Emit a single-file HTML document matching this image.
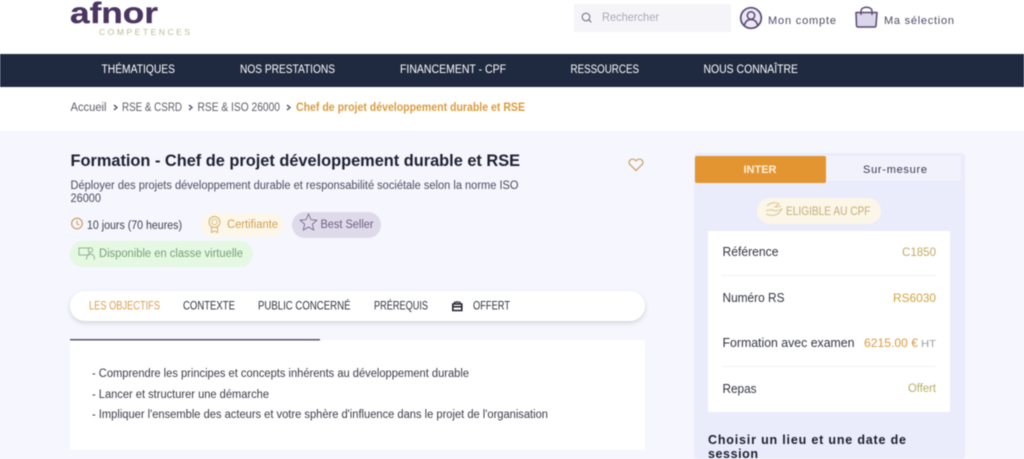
<!DOCTYPE html>
<html lang="fr"><head><meta charset="utf-8"><title>Formation</title>
<style>
html,body{margin:0;padding:0;width:1024px;height:459px;overflow:hidden;background:#f5f6fe}
svg{display:block;filter:blur(.45px)}
text{font-family:"Liberation Sans",sans-serif;font-size:11.5px;fill:#33364a}
.b{font-weight:700}
</style></head><body>
<svg width="1024" height="459" viewBox="0 0 1024 459" xmlns="http://www.w3.org/2000/svg">
<defs>
<filter id="sh" x="-5%" y="-30%" width="110%" height="170%"><feDropShadow dx="0" dy="2" stdDeviation="2" flood-color="#555" flood-opacity=".22"/></filter>
</defs>
<rect width="1024" height="459" fill="#f5f6fe"/>
<rect width="1024" height="54" fill="#fff"/>
<rect y="54" width="1024" height="33" fill="#1f2a40"/>
<rect y="87" width="1024" height="44" fill="#fff"/>

<!-- logo -->
<text x="70" y="23" class="b" style="font-size:30px;fill:#4a3560;stroke:#4a3560;stroke-width:.3" textLength="88" lengthAdjust="spacingAndGlyphs">afnor</text>
<text x="99" y="35" style="font-size:8.500px;fill:#bcb98e" textLength="91" lengthAdjust="spacing">COMPETENCES</text>

<!-- search -->
<rect x="574" y="4" width="157" height="28" rx="2" fill="#f5f5f9"/>
<circle cx="586" cy="17" r="3.800" fill="none" stroke="#77778a" stroke-width="1.100"/>
<path d="M588.800 19.800l2.500 2.500" stroke="#77778a" stroke-width="1.100"/>
<text x="602" y="21" style="font-size:12px;fill:#a9a9b5" textLength="57" lengthAdjust="spacingAndGlyphs">Rechercher</text>

<!-- account -->
<circle cx="751" cy="18" r="10.300" fill="#ece8f4" stroke="#57496f" stroke-width="1.700"/>
<circle cx="751" cy="15.500" r="3.700" fill="none" stroke="#57496f" stroke-width="1.500"/>
<path d="M744.500 25c1-4 3.500-5.500 6.500-5.500s5.500 1.500 6.500 5.500" fill="none" stroke="#57496f" stroke-width="1.500"/>
<text x="768" y="24" style="font-size:11px;fill:#4e4a62" textLength="68" lengthAdjust="spacing">Mon compte</text>

<!-- bag -->
<path d="M856 12.500h21l-1 13a1.500 1.500 0 0 1-1.500 1.500h-16.500a1.500 1.500 0 0 1-1.500-1.500z" fill="#dcd6ea" stroke="#57496f" stroke-width="1.500" stroke-linejoin="round"/>
<path d="M861 15v-4c0-5 11-5 11 0v4" fill="none" stroke="#57496f" stroke-width="1.400"/>
<text x="884" y="24" style="font-size:11px;fill:#4e4a62" textLength="70" lengthAdjust="spacing">Ma sélection</text>

<!-- nav -->
<g>
<text x="101.500" y="73" style="font-size:11.500px;fill:#fff" textLength="73.500" lengthAdjust="spacingAndGlyphs">THÉMATIQUES</text>
<text x="240" y="73" style="font-size:11.500px;fill:#fff" textLength="95" lengthAdjust="spacingAndGlyphs">NOS PRESTATIONS</text>
<text x="400" y="73" style="font-size:11.500px;fill:#fff" textLength="106" lengthAdjust="spacingAndGlyphs">FINANCEMENT - CPF</text>
<text x="570.500" y="73" style="font-size:11.500px;fill:#fff" textLength="68.500" lengthAdjust="spacingAndGlyphs">RESSOURCES</text>
<text x="703.500" y="73" style="font-size:11.500px;fill:#fff" textLength="94.500" lengthAdjust="spacingAndGlyphs">NOUS CONNAÎTRE</text>
</g>

<!-- breadcrumb -->
<g>
<text x="70.500" y="111" style="fill:#5b5b68" textLength="36" lengthAdjust="spacingAndGlyphs">Accueil</text>
<path d="M114 105l3 2.500-3 2.500M189 105l3 2.500-3 2.500M287 105l3 2.500-3 2.500" fill="none" stroke="#44465a" stroke-width="1.300"/>
<text x="122" y="111" style="fill:#5b5b68" textLength="60" lengthAdjust="spacingAndGlyphs">RSE &amp; CSRD</text>
<text x="197.500" y="111" style="fill:#5b5b68" textLength="82.500" lengthAdjust="spacingAndGlyphs">RSE &amp; ISO 26000</text>
<text x="296" y="111" class="b" style="font-size:11.500px;fill:#d99b3c" textLength="229" lengthAdjust="spacingAndGlyphs">Chef de projet développement durable et RSE</text>
</g>

<!-- title -->
<text x="70.500" y="166" class="b" style="font-size:17px;fill:#1d2032" textLength="449.500" lengthAdjust="spacingAndGlyphs">Formation - Chef de projet développement durable et RSE</text>
<text x="70.500" y="189" style="font-size:11.500px;fill:#494b5c" textLength="448" lengthAdjust="spacingAndGlyphs">Déployer des projets développement durable et responsabilité sociétale selon la norme ISO</text>
<text x="70.500" y="202" style="font-size:11.500px;fill:#494b5c" textLength="30.500" lengthAdjust="spacingAndGlyphs">26000</text>

<path d="M636 170.500l-6-5.900c-3-3.400 1.900-8 6-3.800 4.100-4.200 9 .4 6 3.800z" fill="none" stroke="#c9a76a" stroke-width="1.300"/>

<!-- badges -->
<circle cx="77" cy="223.500" r="5.300" fill="none" stroke="#c89b52" stroke-width="1.100"/>
<path d="M77 220.500v3.300l2.200 1.200" fill="none" stroke="#c89b52" stroke-width="1"/>
<text x="87" y="229" style="font-size:11.500px;fill:#3c3e50" textLength="95" lengthAdjust="spacingAndGlyphs">10 jours (70 heures)</text>

<rect x="201" y="213" width="83" height="24" rx="12" fill="#fdf7ea"/>
<circle cx="214.500" cy="222" r="5.500" fill="none" stroke="#d3b26c" stroke-width="1"/>
<circle cx="214.500" cy="222" r="2.800" fill="none" stroke="#d3b26c" stroke-width=".8"/>
<path d="M211.500 226.500v6l3-1.500 3 1.500v-6" fill="none" stroke="#d3b26c" stroke-width="1"/>
<text x="227" y="228" style="font-size:11.500px;fill:#d2a04e" textLength="51" lengthAdjust="spacingAndGlyphs">Certifiante</text>

<rect x="292" y="212" width="89" height="26" rx="13" fill="#dfdaea"/>
<path d="M308.500 214l2.400 5.600 6 .6-4.500 4 1.300 5.900-5.200-3.100-5.200 3.100 1.300-5.900-4.500-4 6-.6z" fill="none" stroke="#6d5f88" stroke-width=".8"/>
<text x="320.500" y="228" style="font-size:11.500px;fill:#6a5f80" textLength="53" lengthAdjust="spacingAndGlyphs">Best Seller</text>

<rect x="70" y="241" width="183" height="26" rx="13" fill="#e5f8e2"/>
<rect x="79" y="248" width="10" height="7" fill="none" stroke="#8aa98c" stroke-width=".9"/>
<circle cx="90.500" cy="250" r="2.200" fill="#e5f8e2" stroke="#8aa98c" stroke-width=".9"/>
<path d="M86.500 259.500c0-4 2-5.500 4-5.500s4 1.500 4 5.500" fill="none" stroke="#8aa98c" stroke-width=".9"/>
<text x="99" y="257" style="font-size:11.500px;fill:#76a07a" textLength="144" lengthAdjust="spacingAndGlyphs">Disponible en classe virtuelle</text>

<!-- tabs -->
<rect x="70" y="291" width="575" height="30" rx="15" fill="#fff" filter="url(#sh)"/>
<text x="89" y="309.500" style="font-size:11.500px;fill:#dc9d50" textLength="71" lengthAdjust="spacingAndGlyphs">LES OBJECTIFS</text>
<text x="183" y="309.500" style="font-size:11.500px;fill:#30323f" textLength="52" lengthAdjust="spacingAndGlyphs">CONTEXTE</text>
<text x="258" y="309.500" style="font-size:11.500px;fill:#30323f" textLength="92.500" lengthAdjust="spacingAndGlyphs">PUBLIC CONCERNÉ</text>
<text x="374" y="309.500" style="font-size:11.500px;fill:#30323f" textLength="54" lengthAdjust="spacingAndGlyphs">PRÉREQUIS</text>
<rect x="452.800" y="304" width="9" height="6.500" fill="none" stroke="#1d1d28" stroke-width="1.500"/>
<path d="M452.800 306.800h9M454.800 301.500v2.500M459.800 301.500v2.500M456 302h2.500" stroke="#1d1d28" stroke-width="1.500"/>
<text x="473" y="309.500" style="font-size:11.500px;fill:#30323f" textLength="37" lengthAdjust="spacingAndGlyphs">OFFERT</text>

<!-- content -->
<rect x="70" y="340" width="575" height="110" fill="#fff"/>
<rect x="70" y="339" width="250" height="1.500" fill="#5a5670"/>
<text x="92" y="377" style="fill:#3a3a48" textLength="377" lengthAdjust="spacingAndGlyphs">- Comprendre les principes et concepts inhérents au développement durable</text>
<text x="92" y="398" style="fill:#3a3a48" textLength="177" lengthAdjust="spacingAndGlyphs">- Lancer et structurer une démarche</text>
<text x="92" y="418" style="fill:#3a3a48" textLength="456" lengthAdjust="spacingAndGlyphs">- Impliquer l'ensemble des acteurs et votre sphère d'influence dans le projet de l'organisation</text>

<!-- right panel -->
<rect x="694" y="153" width="271" height="306" rx="4" fill="#eaecfb"/>
<rect x="826" y="156" width="135" height="25" fill="#f1f2fc"/>
<rect x="695" y="156" width="131" height="27" rx="2" fill="#e29530"/>
<text x="743.500" y="173" class="b" style="font-size:11px;fill:#fff0d8" textLength="33" lengthAdjust="spacing">INTER</text>
<text x="863" y="173" style="font-size:11px;fill:#363850" textLength="64" lengthAdjust="spacing">Sur-mesure</text>

<rect x="757" y="198" width="124" height="26" rx="13" fill="#fbf6e8"/>
<path d="M767 206c4-4 9-4 12-2l-4 3c2 0 4 0 6-1M766 211c4-2 7-1 10 0l6-2-3 4c-4 3-9 3-13 1" fill="none" stroke="#d8c08c" stroke-width=".9"/>
<text x="786" y="215" style="font-size:11.500px;fill:#c5ad78" textLength="84.500" lengthAdjust="spacingAndGlyphs">ELIGIBLE AU CPF</text>

<rect x="708" y="231" width="242" height="181" fill="#fff"/>
<rect x="722" y="275" width="214" height="1" fill="#f3f3f6"/>
<rect x="722" y="366" width="214" height="1" fill="#f3f3f6"/>
<text x="722.500" y="256" style="font-size:12.500px;fill:#343644" textLength="56" lengthAdjust="spacingAndGlyphs">Référence</text>
<text x="902" y="256" style="font-size:12px;fill:#c0aa62" textLength="34" lengthAdjust="spacingAndGlyphs">C1850</text>
<text x="722.500" y="302" style="font-size:12.500px;fill:#343644" textLength="62" lengthAdjust="spacingAndGlyphs">Numéro RS</text>
<text x="893" y="302" style="font-size:12px;fill:#d3a23f" textLength="43" lengthAdjust="spacingAndGlyphs">RS6030</text>
<text x="722.500" y="347" style="font-size:12.500px;fill:#343644" textLength="132" lengthAdjust="spacingAndGlyphs">Formation avec examen</text>
<text x="864" y="347" style="font-size:12px;fill:#dd9a3a" textLength="54" lengthAdjust="spacingAndGlyphs">6215.00 €</text>
<text x="921" y="347" style="font-size:10.500px;fill:#9c9aa0" textLength="15" lengthAdjust="spacingAndGlyphs">HT</text>
<text x="722.500" y="393" style="font-size:12.500px;fill:#343644" textLength="34" lengthAdjust="spacingAndGlyphs">Repas</text>
<text x="908" y="392" style="fill:#b7ad62" textLength="28" lengthAdjust="spacingAndGlyphs">Offert</text>

<text x="708" y="444" class="b" style="font-size:12.500px;fill:#1b1e30" textLength="198" lengthAdjust="spacing">Choisir un lieu et une date de</text>
<text x="708" y="458" class="b" style="font-size:12.500px;fill:#1b1e30" textLength="50" lengthAdjust="spacing">session</text>
</svg>
</body></html>
